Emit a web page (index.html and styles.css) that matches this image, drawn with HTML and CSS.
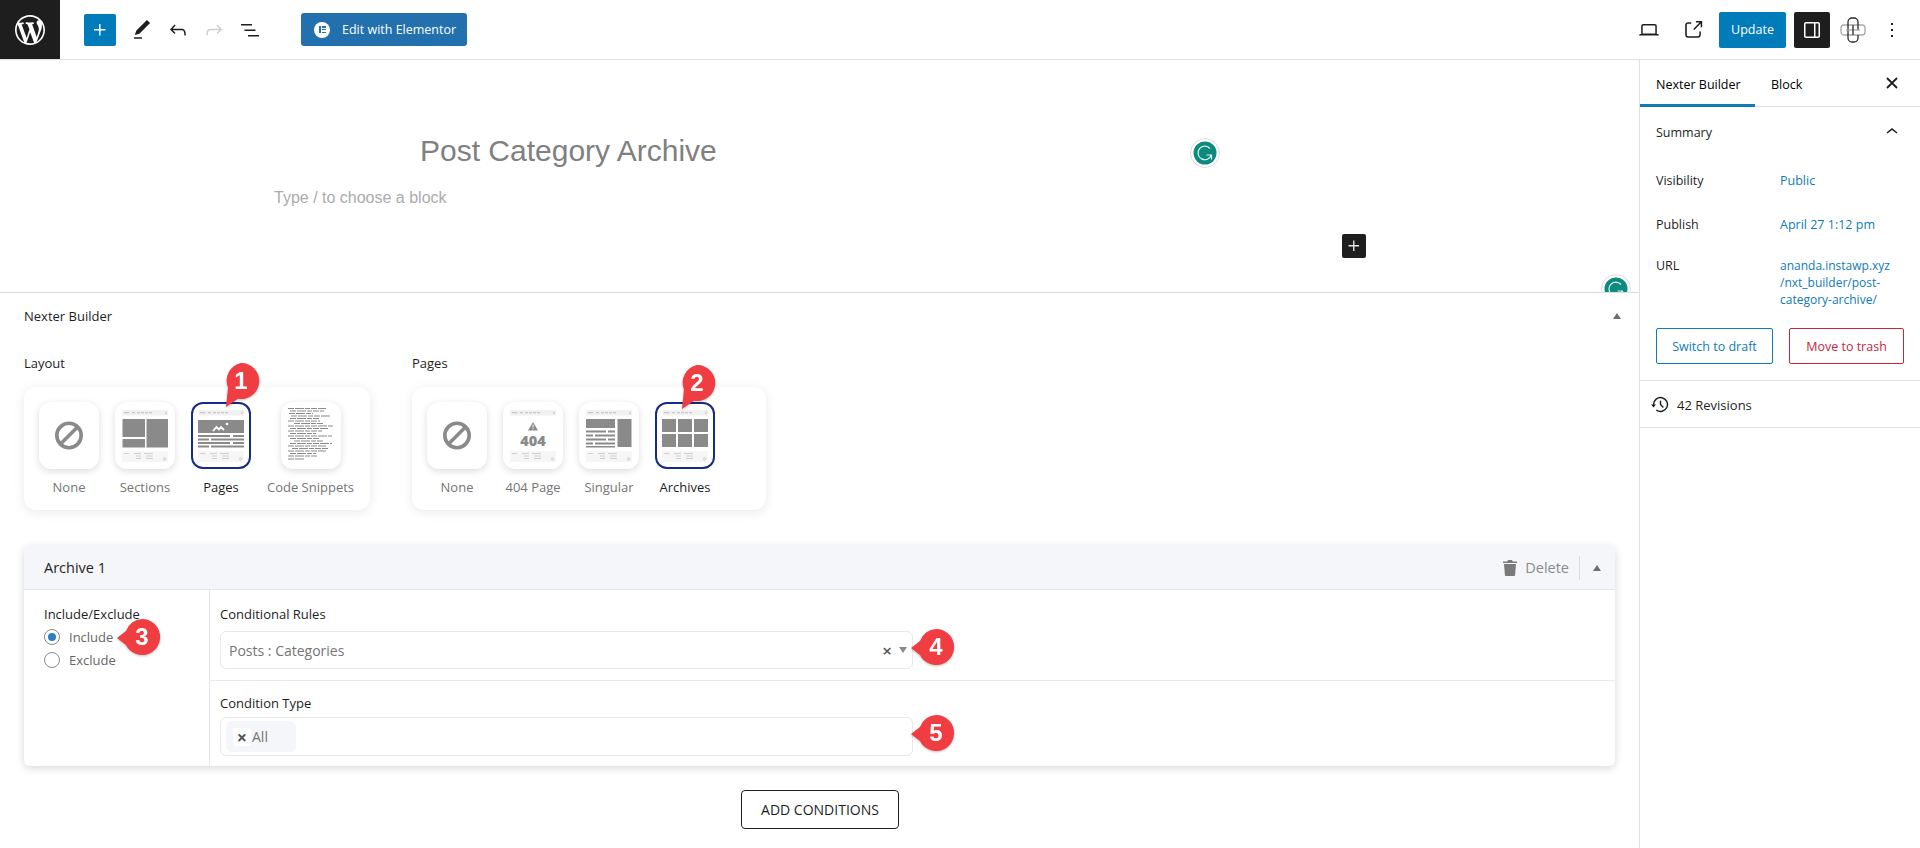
FILE: index.html
```html
<!DOCTYPE html>
<html lang="en">
<head>
<meta charset="utf-8">
<title>Post Category Archive</title>
<link rel="stylesheet" href="styles.css">
</head>
<body>
<svg class="defs" width="0" height="0" aria-hidden="true">
  <symbol id="thumb-head" viewBox="0 0 60 67">
    <rect x="7" y="8" width="46" height="5.5" fill="#f1f1f1"/>
    <path d="M9 10.700h5M17 10.700h3M22 10.700h3M26 10.700h3M30 10.700h3M34 10.700h3M51 9.700v2.400" stroke="#bdbdbd" stroke-width="1" fill="none"/>
    <rect x="7" y="49" width="46" height="11" fill="#f6f6f6"/>
    <path d="M9 51.500h5M19 51.500h7M29 51.500h9M21 54h5M31 54h7M21 56.500h5M31 56.500h7" stroke="#cfcfcf" stroke-width="1" fill="none"/>
    <circle cx="49.500" cy="57" r="1.800" fill="#dcdcdc"/>
  </symbol>
  <symbol id="thumb-none" viewBox="0 0 60 67">
    <circle cx="30" cy="33.500" r="12.200" fill="none" stroke="#8a8a8a" stroke-width="3.600"/>
    <path d="M21.500 42 38.500 25" stroke="#8a8a8a" stroke-width="3.600"/>
  </symbol>
  <symbol id="callout-down" viewBox="0 0 44 50"><path d="M22 2a18 18 0 1 1-3 35.700L7 46l2-19.500A18 18 0 0 1 22 2z" fill="#ef3d42"/></symbol>
  <symbol id="callout-left" viewBox="0 0 50 44"><path d="M28 3a18 18 0 1 1-16 26L3 22l9-7A18 18 0 0 1 28 3z" fill="#ef3d42"/></symbol>
  <symbol id="g-mark" viewBox="0 0 30 30">
    <circle cx="15" cy="15" r="14.500" fill="#fff" stroke="#dcdcdc"/>
    <circle cx="15" cy="15" r="11.500" fill="#0b8a7d"/>
    <path d="M20 10.500A6.800 6.800 0 1 0 21.300 17h-4.800M21.500 21.500V17" fill="none" stroke="#dff3f0" stroke-width="1.200"/>
  </symbol>
</svg>

<div class="app">
  <header class="topbar">
    <div class="topbar-left">
      <a class="wp-logo" href="#" aria-label="WordPress">
        <svg viewBox="0 0 20 20" width="30" height="30"><path fill="#fff" d="M20 10c0-5.510-4.490-10-10-10C4.480 0 0 4.490 0 10c0 5.520 4.480 10 10 10 5.510 0 10-4.480 10-10zM7.780 15.370L4.370 6.220c.550-.020 1.170-.080 1.170-.080.500-.060.440-1.130-.060-1.110 0 0-1.450.110-2.370.110-.180 0-.370 0-.580-.010C4.120 2.690 6.870 1.110 10 1.110c2.330 0 4.450.870 6.050 2.340-.680-.110-1.650.390-1.650 1.580 0 .740.450 1.360.900 2.100.350.610.550 1.360.550 2.460 0 1.490-1.400 5-1.400 5l-3.030-8.370c.540-.020.820-.170.820-.170.500-.050.440-1.250-.060-1.220 0 0-1.440.120-2.380.120-.870 0-2.330-.120-2.330-.120-.500-.030-.560 1.200-.060 1.220l.920.080 1.260 3.410zM17.410 10c.240-.640.740-1.870.430-4.250.700 1.290 1.050 2.710 1.050 4.250 0 3.290-1.730 6.240-4.400 7.780.970-2.590 1.940-5.200 2.920-7.780zM6.100 18.090C3.120 16.650 1.110 13.530 1.110 10c0-1.300.230-2.480.720-3.590C3.250 10.300 4.670 14.200 6.100 18.090zm4.030-6.630l2.580 6.980c-.860.290-1.760.450-2.710.450-.790 0-1.570-.110-2.290-.330.810-2.380 1.620-4.740 2.420-7.100z"/></svg>
      </a>
      <button class="square-btn square-btn-blue" aria-label="Add block">
        <svg viewBox="0 0 24 24" width="24" height="24"><path fill="#fff" d="M11 12.500v5h1.500v-5h5V11h-5V6H11v5H6v1.500h5z"/></svg>
      </button>
      <div class="tools">
        <button class="icon-btn" aria-label="Tools"><svg viewBox="0 0 24 24" width="24" height="24"><path d="M20.100 5.100L16.900 2 6.200 12.700l-1.300 4.400 4.500-1.300L20.100 5.100zM4 20.800h8v-1.500H4v1.500z"/></svg></button>
        <button class="icon-btn" aria-label="Undo"><svg viewBox="0 0 24 24" width="24" height="24"><path d="M18.300 11.700c-.6-.6-1.400-.9-2.300-.9H6.700l2.900-3.300-1.100-1-4.500 5L8.500 16l1-1-2.700-2.700H16c.5 0 .9.200 1.300.5 1 1 1 3.400 1 4.500v.3h1.500v-.2c0-1.500 0-4.300-1.500-5.700z"/></svg></button>
        <button class="icon-btn icon-btn-off" aria-label="Redo"><svg viewBox="0 0 24 24" width="24" height="24"><path d="M15.600 6.500l-1.100 1 2.900 3.300H8c-.9 0-1.700.3-2.300.9-1.400 1.500-1.400 4.200-1.400 5.600v.2h1.500v-.3c0-1.100 0-3.500 1-4.500.3-.3.7-.5 1.300-.5h9.200L14.500 15l1.100 1.100 4.600-4.600-4.600-5z"/></svg></button>
        <button class="icon-btn" aria-label="List view"><svg viewBox="0 0 24 24" width="24" height="24"><path d="M3 6h11v1.500H3V6zm3.500 5.500h11V13h-11v-1.500zM21 17H10v1.500h11V17z"/></svg></button>
      </div>
      <button class="elementor-btn">
        <span class="elementor-mark"><i></i><b></b></span>
        <span>Edit with Elementor</span>
      </button>
    </div>
    <div class="topbar-right">
      <button class="icon-btn icon-btn-wide" aria-label="View"><svg viewBox="0 0 24 24" width="24" height="24"><path d="M20.500 16h-.7V8c0-1.100-.9-2-2-2H6.200c-1.100 0-2 .9-2 2v8h-.7c-.8 0-1.500.7-1.500 1.500h20c0-.8-.7-1.500-1.500-1.500zM5.700 8c0-.3.2-.5.5-.5h11.600c.3 0 .5.2.5.5v7.600H5.700V8z"/></svg></button>
      <button class="icon-btn icon-btn-wide" aria-label="View post"><svg viewBox="0 0 24 24" width="24" height="24"><path d="M18.200 17c0 .7-.6 1.200-1.200 1.200H7c-.7 0-1.200-.6-1.200-1.200V7c0-.7.6-1.200 1.200-1.200h3.200V4.200H7C5.500 4.200 4.200 5.500 4.200 7v10c0 1.500 1.200 2.800 2.800 2.800h10c1.500 0 2.800-1.200 2.800-2.800v-3.600h-1.500V17zM14.900 3v1.500h3.700l-6.400 6.400 1.100 1.100 6.400-6.400v3.700h1.500V3h-6.800z"/></svg></button>
      <button class="update-btn">Update</button>
      <button class="settings-btn" aria-label="Settings"><svg viewBox="0 0 24 24" width="24" height="24"><path fill="#fff" d="M18 4H6c-1.100 0-2 .9-2 2v12c0 1.100.9 2 2 2h12c1.100 0 2-.9 2-2V6c0-1.100-.9-2-2-2zm-4 14.500H6c-.3 0-.5-.2-.5-.5V6c0-.3.2-.5.5-.5h8v13zm4.500-.5c0 .3-.2.5-.5.500h-2.500v-13H18c.3 0 .5.2.5.5v12z"/></svg></button>
      <button class="plugin-btn" aria-label="Nexter">
        <svg viewBox="0 0 26 26" width="26" height="26" fill="none"><rect x="1" y="8" width="24" height="10" rx="3" stroke="#a8a8a8" stroke-width="1.300"/><path d="M8 13V5a4 4 0 0 1 4-4h2a4 4 0 0 1 4 4v8M8 13v8a4 4 0 0 0 4 4h2a4 4 0 0 0 4-4v-3" stroke="#2a2a2a" stroke-width="1.300"/><path d="M6 13h14" stroke="#a8a8a8" stroke-width="1.300"/><path d="M13 8v10" stroke="#2a2a2a" stroke-width="1.300"/></svg>
      </button>
      <button class="icon-btn" aria-label="Options"><svg viewBox="0 0 24 24" width="24" height="24"><path d="M13 19h-2v-2h2v2zm0-6h-2v-2h2v2zm0-6h-2V5h2v2z"/></svg></button>
    </div>
  </header>

  <div class="workspace">
    <main class="content">
      <section class="editor">
        <h1 class="post-title">Post Category Archive</h1>
        <p class="placeholder">Type / to choose a block</p>
        <svg class="g-icon g-icon-a"><use href="#g-mark"/></svg>
        <svg class="g-icon g-icon-b"><use href="#g-mark"/></svg>
        <button class="float-add" aria-label="Add block"><svg viewBox="0 0 24 24" width="22" height="22"><path fill="#e6e6e6" d="M11 12.500v5h1.500v-5h5V11h-5V6H11v5H6v1.500h5z"/></svg></button>
      </section>

      <section class="panel">
        <div class="panel-head">
          <span>Nexter Builder</span>
          <i class="tri tri-up"></i>
        </div>

        <div class="groups">
          <div class="group">
            <h3 class="group-title">Layout</h3>
            <div class="card card-layout">
              <div class="choice">
                <div class="tile"><svg viewBox="0 0 60 67"><use href="#thumb-none"/></svg></div>
                <span>None</span>
              </div>
              <div class="choice">
                <div class="tile"><svg viewBox="0 0 60 67"><use href="#thumb-head"/><path fill="#8a8a8a" d="M7.500 17H30v18H7.500zM7.500 37H30v8.500H7.500zM31.500 17H53v28.500H31.500z"/></svg></div>
                <span>Sections</span>
              </div>
              <div class="choice choice-on">
                <div class="tile"><svg viewBox="0 0 60 67"><use href="#thumb-head"/><path fill="#8a8a8a" d="M7 18h46v13H7zM7 33h32v2H7zM42 33h11v2H42zM7 36.500h11v2H7zM20 36.500h33v2H20zM7 40h32v2H7zM42 40h11v2H42zM7 43.500h11v2H7zM20 43.500h33v2H20z"/><path d="M22 29l3.500-4 2.500 2.500 2-2.500 3 3" fill="none" stroke="#fff" stroke-width="1.800"/><circle cx="36" cy="22" r="1.300" fill="#fff"/></svg></div>
                <span>Pages</span>
              </div>
              <div class="choice choice-wide">
                <div class="tile"><svg viewBox="0 0 60 67"><path fill="none" stroke="#8a8a8a" stroke-width="1.100" stroke-dasharray="6 1 9 1 5 1" d="M7 6.500h38M9 9h34M8 11.500h24M10 14h40M9 16.500h30M7 19h32M13 21.500h30M7 24h46M9 26.500h38M7 29h34M9 31.500h26M7 34h44M9 36.500h30M13 39h30M9 41.500h42M7 44h38M11 46.500h36M7 49h38M9 51.500h26M7 54h30M7 57h16"/></svg></div>
                <span>Code Snippets</span>
              </div>
            </div>
          </div>

          <div class="group">
            <h3 class="group-title">Pages</h3>
            <div class="card card-pages">
              <div class="choice">
                <div class="tile"><svg viewBox="0 0 60 67"><use href="#thumb-none"/></svg></div>
                <span>None</span>
              </div>
              <div class="choice">
                <div class="tile"><svg viewBox="0 0 60 67"><use href="#thumb-head"/><path fill="#8a8a8a" d="M30 20l5 8.500H25z"/><path stroke="#fff" stroke-width="1" d="M30 22.500v3M30 26.200v1"/><text class="tile-404" x="30" y="43.500" text-anchor="middle">404</text></svg></div>
                <span>404 Page</span>
              </div>
              <div class="choice">
                <div class="tile"><svg viewBox="0 0 60 67"><use href="#thumb-head"/><path fill="#8a8a8a" d="M7 17h29v9H7zM38.500 17H52.500v28H38.500zM7 28.500h20v2H7zM29 28.500h7v2h-7zM7 32.500h7v2H7zM16 32.500h20v2H16zM7 36.500h20v2H7zM29 36.500h7v2h-7zM7 40.500h7v2H7zM16 40.500h20v2H16zM7 44h29v1.500H7z"/></svg></div>
                <span>Singular</span>
              </div>
              <div class="choice choice-on">
                <div class="tile"><svg viewBox="0 0 60 67"><use href="#thumb-head"/><path fill="#8a8a8a" d="M7 17h14v13H7zM23 17h14v13H23zM39 17h14v13H39zM7 32h14v13H7zM23 32h14v13H23zM39 32h14v13H39z"/></svg></div>
                <span>Archives</span>
              </div>
            </div>
          </div>
        </div>

        <div class="archive">
          <div class="archive-head">
            <span class="archive-name">Archive 1</span>
            <div class="archive-actions">
              <svg viewBox="0 0 14 16" width="14" height="16"><path fill="#7a7a7a" d="M5 0h4l.7 1.500H14V3H0V1.500h4.300zM1 4h12l-.9 11a1 1 0 0 1-1 1H2.900a1 1 0 0 1-1-1z"/></svg>
              <span class="delete-label">Delete</span>
              <i class="actions-sep"></i>
              <i class="tri tri-up"></i>
            </div>
          </div>
          <div class="archive-body">
            <div class="inc-col">
              <div class="field-label">Include/Exclude</div>
              <div class="radio-row"><i class="radio radio-on"></i><span>Include</span></div>
              <div class="radio-row"><i class="radio"></i><span>Exclude</span></div>
            </div>
            <div class="rules-col">
              <div class="rule rule-first">
                <div class="field-label">Conditional Rules</div>
                <div class="select">
                  <span class="select-value">Posts : Categories</span>
                  <span class="select-x">×</span>
                  <i class="tri tri-down"></i>
                </div>
              </div>
              <div class="rule rule-second">
                <div class="field-label">Condition Type</div>
                <div class="select select-multi">
                  <span class="chip"><span class="chip-x">×</span><span>All</span></span>
                </div>
              </div>
            </div>
          </div>
        </div>

        <div class="add-row"><button class="add-btn">ADD CONDITIONS</button></div>

        <div class="callout callout-1"><svg><use href="#callout-down"/></svg><b>1</b></div>
        <div class="callout callout-2"><svg><use href="#callout-down"/></svg><b>2</b></div>
        <div class="callout callout-3 callout-l"><svg><use href="#callout-left"/></svg><b>3</b></div>
        <div class="callout callout-4 callout-l"><svg><use href="#callout-left"/></svg><b>4</b></div>
        <div class="callout callout-5 callout-l"><svg><use href="#callout-left"/></svg><b>5</b></div>
      </section>
    </main>

    <aside class="sidebar">
      <div class="tabs">
        <button class="tab tab-on">Nexter Builder</button>
        <button class="tab">Block</button>
        <button class="tab-close" aria-label="Close"><svg viewBox="0 0 16 16" width="16" height="16"><path d="M3 3l10 10M13 3L3 13" stroke="#1e1e1e" stroke-width="1.800" fill="none"/></svg></button>
      </div>
      <div class="summary">
        <div class="summary-head">
          <span>Summary</span>
          <svg viewBox="0 0 24 24" width="24" height="24"><path fill="#1e1e1e" d="M6.500 12.400L12 8l5.500 4.400-.9 1.200L12 10l-4.500 3.600-1-1.200z"/></svg>
        </div>
        <div class="meta meta-vis"><span>Visibility</span><a href="#">Public</a></div>
        <div class="meta meta-pub"><span>Publish</span><a href="#">April 27 1:12 pm</a></div>
        <div class="meta meta-url"><span>URL</span><a href="#">ananda.instawp.xyz<br>/nxt_builder/post-<br>category-archive/</a></div>
        <div class="side-btns">
          <button class="outline-btn outline-blue">Switch to draft</button>
          <button class="outline-btn outline-red">Move to trash</button>
        </div>
      </div>
      <div class="revisions">
        <svg viewBox="0 0 24 24" width="23" height="23"><path fill="#1e1e1e" d="M5.500 12h1.750l-2.500 3-2.500-3H4a8 8 0 1 1 3.134 6.350l.907-1.194A6.500 6.500 0 1 0 5.500 12zm9.530 1.970l-2.280-2.280V8.500a.75.750 0 0 0-1.500 0V12c0 .2.080.39.220.53l2.500 2.500a.75.750 0 1 0 1.060-1.060z"/></svg>
        <span>42 Revisions</span>
      </div>
    </aside>
  </div>
</div>
</body>
</html>
```
FILE: styles.css
```css
* { box-sizing: border-box; }
html, body { margin: 0; height: 100%; }
body {
  font-family: "Open Sans", "Noto Sans", sans-serif;
  font-size: 12.5px;
  color: #1e1e1e;
  background: #fff;
  overflow: hidden;
}
.defs { position: absolute; }
button { font: inherit; background: none; border: 0; padding: 0; cursor: pointer; }
a { color: #0f7cb4; text-decoration: none; }

.app { width: 1920px; height: 848px; display: flex; flex-direction: column; }

/* top bar */
.topbar {
  height: 60px;
  flex: none;
  border-bottom: 1px solid #e0e0e0;
  display: flex;
  justify-content: space-between;
}
.topbar-left, .topbar-right { display: flex; align-items: center; }
.topbar-right { padding-right: 10px; }
.wp-logo {
  width: 60px; height: 59px;
  background: #1e1e1e;
  display: flex; align-items: center; justify-content: center;
}
.square-btn { width: 32px; height: 32px; border-radius: 2px; display: flex; align-items: center; justify-content: center; }
.square-btn-blue { background: #007cba; margin-left: 24px; }
.tools { display: flex; margin-left: 8px; }
.icon-btn { width: 36px; height: 36px; display: flex; align-items: center; justify-content: center; }
.icon-btn svg { fill: #1e1e1e; }
.icon-btn-off svg { fill: #cfcfcf; }
.icon-btn-wide { width: 44px; }
.elementor-btn {
  margin-left: 33px;
  width: 166px; height: 33px;
  background: #2270ad;
  color: #fff;
  border-radius: 3px;
  display: flex; align-items: center;
  padding-left: 13px;
  gap: 12px;
}
.elementor-mark {
  position: relative;
  width: 16px; height: 16px;
  border-radius: 50%;
  background: #fff;
}
.elementor-mark i {
  position: absolute; left: 5px; top: 4.500px;
  width: 1.500px; height: 7px; background: #2270ad;
}
.elementor-mark b {
  position: absolute; left: 8px; top: 4.500px;
  width: 4px; height: 7px;
  background: repeating-linear-gradient(#2270ad 0 1.500px, #fff 1.500px 2.750px);
}
.update-btn {
  margin-left: 4px;
  width: 67px; height: 36px;
  background: #007cba;
  color: #fff;
  border-radius: 2px;
}
.settings-btn {
  margin-left: 8px;
  width: 36px; height: 36px;
  background: #1e1e1e;
  border-radius: 2px;
  display: flex; align-items: center; justify-content: center;
}
.plugin-btn { margin-left: 10px; margin-right: 8px; width: 26px; height: 26px; display: flex; }

/* layout */
.workspace { flex: 1; display: flex; min-height: 0; }
.content { flex: 1; min-width: 0; display: flex; flex-direction: column; }

/* editor canvas */
.editor {
  position: relative;
  height: 233px;
  flex: none;
  overflow: hidden;
  border-bottom: 1px solid #dcdcdc;
  font-family: "Liberation Sans", Arial, sans-serif;
}
.post-title {
  margin: 73px 0 0 420px;
  font-size: 30px;
  font-weight: 400;
  line-height: 36px;
  color: #808080;
}
.placeholder { margin: 19px 0 0 274px; font-size: 16px; line-height: 20px; color: #ababab; }
.g-icon { position: absolute; width: 30px; height: 30px; }
.g-icon-a { left: 1190px; top: 78px; }
.g-icon-b { left: 1601px; top: 214px; }
.float-add {
  position: absolute; left: 1342px; top: 174px;
  width: 24px; height: 24px;
  background: #1e1e1e; border-radius: 2px;
  display: flex; align-items: center; justify-content: center;
}

/* bottom panel */
.panel { position: relative; flex: 1; padding: 0 24px; }
.panel-head {
  height: 48px;
  padding-bottom: 2px;
  display: flex; align-items: center; justify-content: space-between;
  font-size: 13px;
}
.tri { display: block; width: 0; height: 0; border-left: 4.500px solid transparent; border-right: 4.500px solid transparent; }
.tri-up { border-bottom: 6px solid #6e6e6e; }
.tri-down { border-top: 6px solid #8a8a8a; }
.panel-head .tri { margin-right: -6px; }

.groups { display: flex; gap: 42px; margin-top: 12px; }
.group-title { margin: 0 0 14px; font-size: 13px; font-weight: 400; line-height: 20px; }
.card {
  height: 123px;
  padding: 15px;
  border-radius: 12px;
  background: #fff;
  box-shadow: 0 2px 12px rgba(0, 0, 0, .09);
  display: flex;
  gap: 16px;
}
.card-layout { width: 346px; }
.card-pages { width: 354px; }
.choice { width: 60px; display: flex; flex-direction: column; align-items: center; color: #757575; white-space: nowrap; font-size: 13px; }
.choice-wide { width: 87px; }
.choice span { margin-top: 10px; line-height: 17px; }
.choice-on { color: #1e1e1e; }
.tile {
  width: 60px; height: 67px;
  flex: none;
  background: #fff;
  border-radius: 12px;
  box-shadow: 0 2px 7px rgba(0, 0, 0, .14);
}
.tile svg { display: block; width: 60px; height: 67px; }
.choice-on .tile { box-shadow: inset 0 0 0 2px #142c86; }
.tile-404 { font-family: "Open Sans", sans-serif; font-weight: 800; font-size: 14.5px; fill: #8a8a8a; }

/* archive card */
.archive {
  margin-top: 36px;
  width: 1591px;
  height: 220px;
  border-radius: 6px;
  background: #fff;
  box-shadow: 0 2px 8px rgba(0, 0, 0, .16);
  display: flex; flex-direction: column;
}
.archive-head {
  height: 44px;
  flex: none;
  padding: 0 14px 0 20px;
  background: #f5f6fa;
  border-bottom: 1px solid #e4e6ee;
  border-radius: 6px 6px 0 0;
  display: flex; align-items: center; justify-content: space-between;
}
.archive-name { font-size: 14.5px; }
.archive-actions { display: flex; align-items: center; }
.delete-label { margin-left: 8px; font-size: 14.5px; color: #8a8a8a; }
.actions-sep { width: 1px; height: 24px; background: #dcdcdc; margin: 0 13px 0 10px; }
.archive-body { flex: 1; display: flex; min-height: 0; }
.inc-col { width: 186px; flex: none; padding: 14px 20px; border-right: 1px solid #e4e6ee; }
.inc-col .field-label { margin-bottom: 1.500px; }
.rules-col { flex: 1; display: flex; flex-direction: column; }
.field-label { font-size: 13px; line-height: 20px; }
.radio-row { display: flex; align-items: center; height: 23px; color: #666; font-size: 13px; }
.radio-row span { margin-left: 9px; }
.radio {
  position: relative;
  width: 16px; height: 16px;
  border: 1px solid #8a8a8a;
  border-radius: 50%;
  background: #fff;
}
.radio-on::after {
  content: "";
  position: absolute; left: 3px; top: 3px;
  width: 8px; height: 8px;
  border-radius: 50%;
  background: #2a7fc4;
}
.rule { padding: 14px 10px 0; flex: 1; }
.rule-first { flex: none; height: 91px; border-bottom: 1px solid #ebebeb; }
.rule-first .select { margin-top: 7px; }
.rule-second { padding-top: 12px; }
.rule-second .select { margin-top: 4px; }
.select {
  width: 693px; height: 38px;
  border: 1px solid #e6e8ee;
  border-radius: 6px;
  display: flex; align-items: center;
  padding: 0 5px 0 8px;
  font-size: 14px;
  color: #757575;
}
.select-value { flex: 1; }
.select-x { font-size: 17px; font-weight: 600; color: #555; margin-right: 7px; }
.select-multi { height: 39px; padding: 0 5px; }
.chip {
  width: 70px; height: 31px;
  background: #f5f6fa;
  border-radius: 6px;
  display: flex; align-items: center;
  padding-left: 7px;
  font-size: 14px;
}
.chip-x {
  width: 18px; height: 18px;
  background: #fff;
  border-radius: 2px;
  display: flex; align-items: center; justify-content: center;
  font-size: 18px; font-weight: 700; color: #555;
}
.chip-x + span { margin-left: 1px; }

.add-row { margin-top: 24px; display: flex; justify-content: center; }
.add-btn {
  margin-left: 49px;
  margin-right: 48px;
  width: 158px; height: 39px;
  border: 1px solid #1e1e1e;
  border-radius: 4px;
  color: #1e1e1e;
  font-size: 14px;
}

/* numbered callouts */
.callout { position: absolute; width: 44px; height: 50px; filter: drop-shadow(0 1px 1px rgba(0, 0, 0, .25)); }
.callout svg { display: block; width: 44px; height: 50px; }
.callout b {
  position: absolute; left: 4px; top: 2px;
  width: 36px; height: 36px;
  display: flex; align-items: center; justify-content: center;
  font-family: "Liberation Sans", Arial, sans-serif;
  font-size: 24px;
  color: #fff;
}
.callout-l { width: 50px; height: 44px; }
.callout-l svg { width: 50px; height: 44px; }
.callout-l b { left: 10px; top: 3px; }
.callout-1 { left: 219px; top: 68px; }
.callout-2 { left: 675px; top: 70px; }
.callout-3 { left: 114px; top: 323px; }
.callout-4 { left: 908px; top: 333px; }
.callout-5 { left: 908px; top: 419px; }

/* sidebar */
.sidebar { width: 281px; flex: none; border-left: 1px solid #e0e0e0; }
.tabs {
  height: 47px;
  border-bottom: 1px solid #e0e0e0;
  display: flex;
  padding-right: 20px;
}
.tab { height: 47px; padding: 2px 16px 0; font-size: 12.5px; white-space: nowrap; }
.tab-on { width: 115px; box-shadow: inset 0 -3px 0 #0f7cb4; }
.tab-close { margin-left: auto; width: 16px; height: 16px; margin-top: 15px; display: flex; }
.summary { padding: 0 16px; height: 274px; border-bottom: 1px solid #e0e0e0; }
.summary-head { height: 50px; display: flex; align-items: center; justify-content: space-between; }
.meta { display: flex; line-height: 17px; }
.meta span { width: 124px; flex: none; }
.meta-vis { margin-top: 15px; }
.meta-pub { margin-top: 27px; }
.meta-url { margin-top: 24px; }
.meta-url a { font-size: 12px; }
.side-btns { display: flex; gap: 16px; margin-top: 20px; }
.outline-btn { height: 36px; border-radius: 2px; border: 1px solid; }
.outline-blue { width: 117px; color: #0f7cb4; border-color: #0f7cb4; }
.outline-red { width: 115px; color: #c5283d; border-color: #c5283d; }
.revisions {
  height: 47px;
  display: flex; align-items: center; gap: 5px;
  padding: 1px 0 0 9px;
  border-bottom: 1px solid #e0e0e0;
  font-size: 13px;
}
```
